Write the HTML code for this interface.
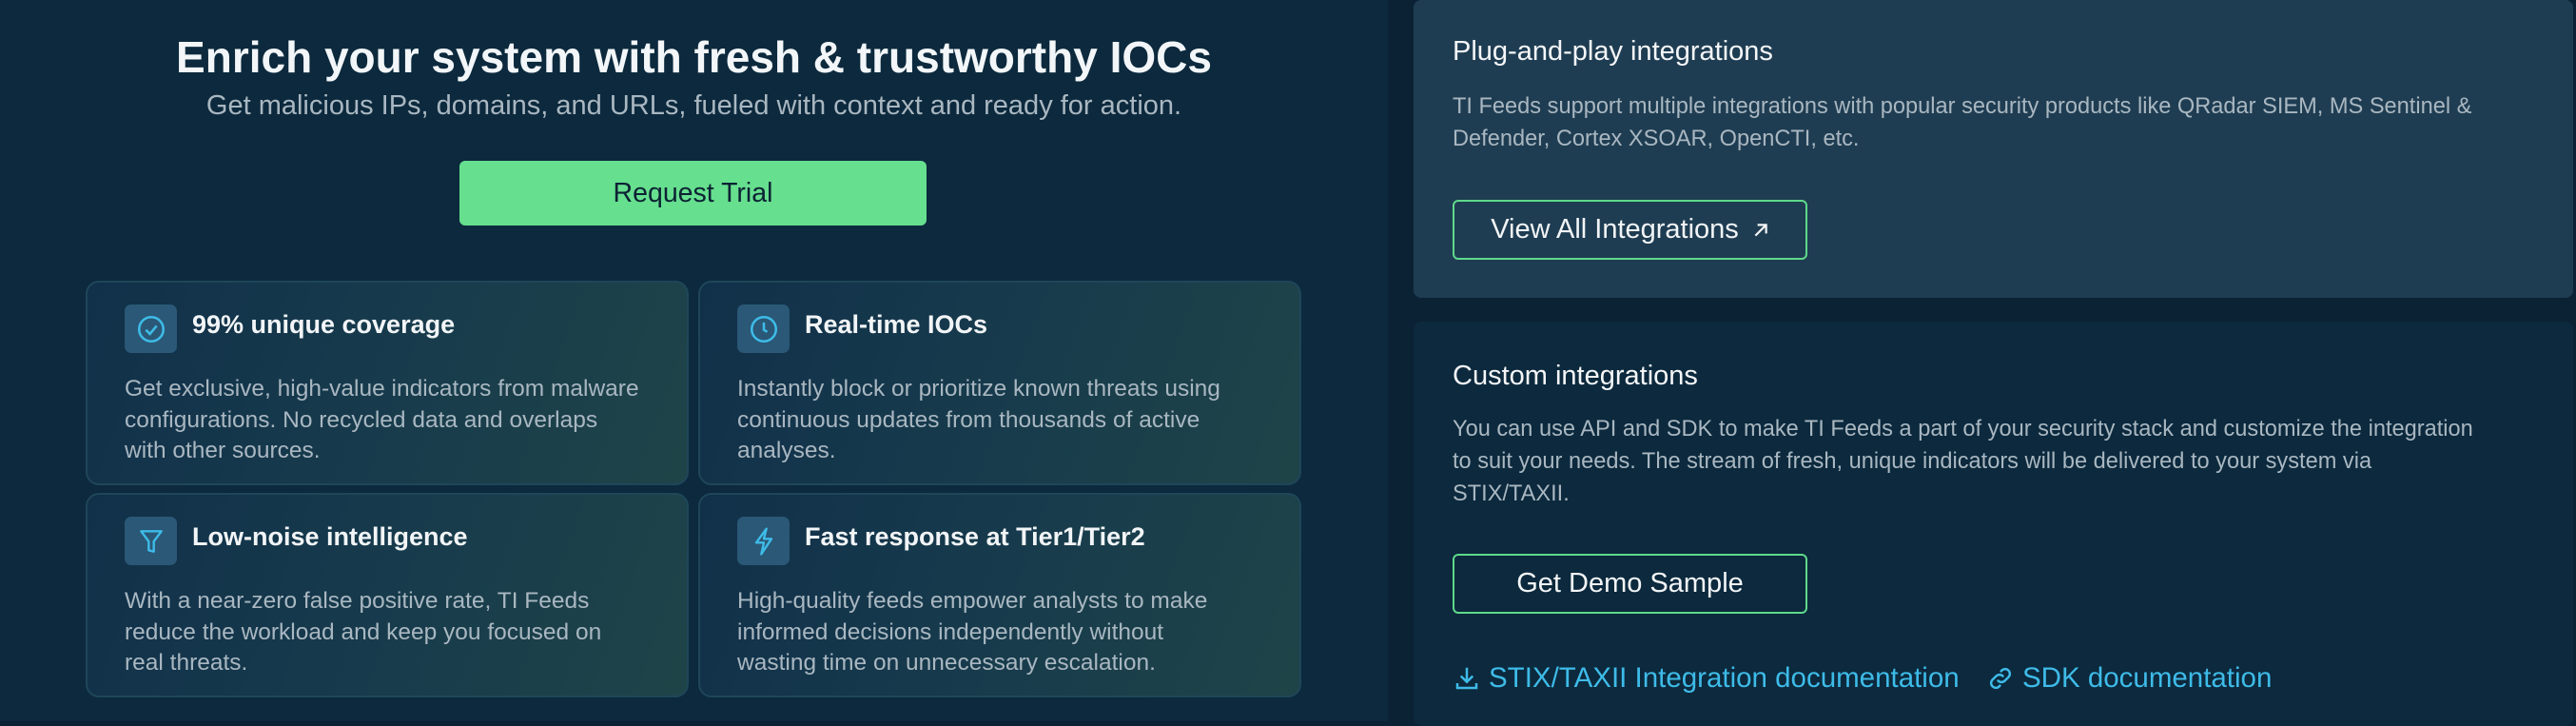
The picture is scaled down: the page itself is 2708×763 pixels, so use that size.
<!DOCTYPE html>
<html><head><meta charset="utf-8"><style>
*{margin:0;padding:0;box-sizing:border-box}
body{width:2708px;height:758px;background:#0b2234;font-family:"Liberation Sans",sans-serif;position:relative;overflow:hidden}
.left{position:absolute;left:0;top:0;width:1459px;height:758px;background:#0c293d}
.t{position:absolute;left:0;width:1459px;text-align:center;white-space:nowrap}
.btn{position:absolute;left:483px;top:169px;width:491px;height:68px;background:#66df8e;border-radius:6px;color:#0c2233;font-size:28.5px;display:flex;align-items:center;justify-content:center}
.card{position:absolute;width:634px;height:215px;border:2px solid #1f4659;border-radius:14px;background:linear-gradient(110deg,#11304a 0%,#173b4c 50%,#1f4448 100%)}
.ic{position:absolute;left:39px;top:23px;width:55px;height:51px;background:#2a5876;border-radius:7px;display:flex;align-items:center;justify-content:center}
.ct{position:absolute;left:110px;top:29px;font-size:27px;color:#f2f5f7;font-weight:bold;white-space:nowrap}
.cb{position:absolute;left:39px;top:96px;font-size:24.5px;line-height:32.5px;color:#a9b7c1;white-space:nowrap}
.panel{position:absolute;left:1486px;width:1219px;border-radius:8px}
.ph{position:absolute;left:41px;font-size:29px;color:#f4f6f8;white-space:nowrap}
.pb{position:absolute;left:41px;font-size:23.6px;line-height:34px;color:#a9b7c1;white-space:nowrap}
.ob{position:absolute;left:41px;width:373px;height:63px;border:2px solid #5ed98a;border-radius:6px;color:#f2f5f7;font-size:29px;display:flex;align-items:center;justify-content:center;gap:14px}
.lk{position:absolute;top:696px;font-size:29.5px;color:#3ebbe8;white-space:nowrap;display:flex;align-items:center;gap:8px}
</style></head><body>
<div class="left">
<div class="t" style="top:33px;font-size:46px;font-weight:bold;color:#f2f6f8">Enrich your system with fresh &amp; trustworthy IOCs</div>
<div class="t" style="top:95px;font-size:29px;color:#a9b7c1">Get malicious IPs, domains, and URLs, fueled with context and ready for action.</div>
<div class="btn">Request Trial</div>

<div class="card" style="left:90px;top:295px">
<div class="ic"><svg width="34" height="34" viewBox="0 0 24 24" fill="none" stroke="#3ebbe8" stroke-width="1.8"><circle cx="12" cy="12" r="9"/><path d="M8 12.5l3 3 5-6"/></svg></div>
<div class="ct">99% unique coverage</div>
<div class="cb">Get exclusive, high-value indicators from malware<br>configurations. No recycled data and overlaps<br>with other sources.</div></div>

<div class="card" style="left:734px;top:295px">
<div class="ic"><svg width="34" height="34" viewBox="0 0 24 24" fill="none" stroke="#3ebbe8" stroke-width="1.8"><circle cx="12" cy="12" r="9"/><path d="M12 7v5.5l2.5 1.5"/></svg></div>
<div class="ct">Real-time IOCs</div>
<div class="cb">Instantly block or prioritize known threats using<br>continuous updates from thousands of active<br>analyses.</div></div>

<div class="card" style="left:90px;top:518px">
<div class="ic"><svg width="32" height="34" viewBox="0 0 24 24" fill="none" stroke="#3ebbe8" stroke-width="1.8" stroke-linejoin="round"><path d="M4 4h16l-6 8v8l-4-1v-7z"/></svg></div>
<div class="ct">Low-noise intelligence</div>
<div class="cb">With a near-zero false positive rate, TI Feeds<br>reduce the workload and keep you focused on<br>real threats.</div></div>

<div class="card" style="left:734px;top:518px">
<div class="ic"><svg width="32" height="34" viewBox="0 0 24 24" fill="none" stroke="#3ebbe8" stroke-width="1.8" stroke-linejoin="round"><path d="M14 2L6 13h6l-2 9 8-12h-6z"/></svg></div>
<div class="ct">Fast response at Tier1/Tier2</div>
<div class="cb">High-quality feeds empower analysts to make<br>informed decisions independently without<br>wasting time on unnecessary escalation.</div></div>
</div>

<div class="panel" style="top:0;height:313px;background:#1f3d52">
<div class="ph" style="top:38px">Plug-and-play integrations</div>
<div class="pb" style="top:95px">TI Feeds support multiple integrations with popular security products like QRadar SIEM, MS Sentinel &amp;<br>Defender, Cortex XSOAR, OpenCTI, etc.</div>
<div class="ob" style="top:210px">View All Integrations <svg width="18" height="18" viewBox="0 0 16 16" fill="none" stroke="#f2f5f7" stroke-width="2"><path d="M3 13L13 3M5 3h8v8"/></svg></div>
</div>

<div class="panel" style="top:338px;height:425px;background:#0c293d">
<div class="ph" style="top:41px">Custom integrations</div>
<div class="pb" style="top:96px">You can use API and SDK to make TI Feeds a part of your security stack and customize the integration<br>to suit your needs. The stream of fresh, unique indicators will be delivered to your system via<br>STIX/TAXII.</div>
<div class="ob" style="top:244px">Get Demo Sample</div>
</div>
<div class="lk" style="left:1527px"><svg width="30" height="30" viewBox="0 0 24 24" fill="none" stroke="#3ebbe8" stroke-width="2"><path d="M12 3v12M7 10l5 5 5-5M4 16v4h16v-4"/></svg>STIX/TAXII Integration documentation</div>
<div class="lk" style="left:2088px"><svg width="30" height="30" viewBox="0 0 24 24" fill="none" stroke="#3ebbe8" stroke-width="2" stroke-linecap="round"><path d="M10 14a4 4 0 0 0 5.6 0l3.5-3.5a4 4 0 0 0-5.6-5.6l-1 1"/><path d="M14 10a4 4 0 0 0-5.6 0l-3.5 3.5a4 4 0 0 0 5.6 5.6l1-1"/></svg>SDK documentation</div>
</body></html>
